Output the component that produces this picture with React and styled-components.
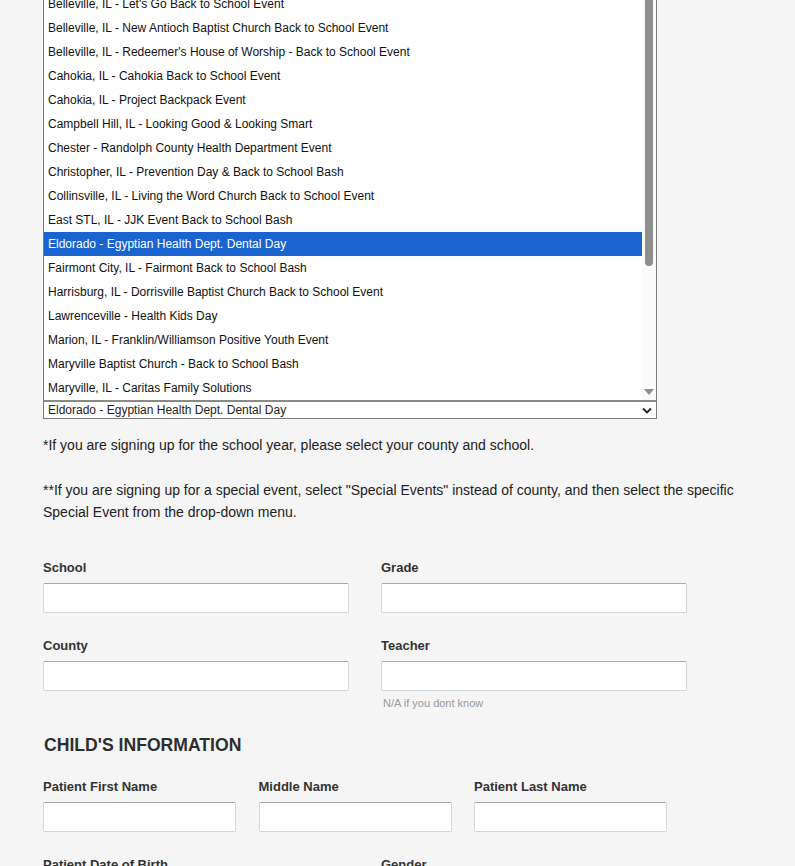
import React from 'react';
import styled, { createGlobalStyle } from 'styled-components';

const GlobalStyle = createGlobalStyle`
  html, body {
    margin: 0;
    padding: 0;
    background: #f5f5f5;
    font-family: "Liberation Sans", Arial, sans-serif;
    overflow: hidden;
  }
`;

const Page = styled.div`
  padding: 0 0 0 43px;
  width: 720px;
`;

const EventPicker = styled.div`
  margin-top: -9px;
  width: 612px;
  border: 1px solid #7a7a7a;
  background: #fff;
`;

const ListArea = styled.div`
  display: flex;
  height: 408px;
  border-bottom: 2px solid #8a8a8a;
`;

const Options = styled.ul`
  flex: 1;
  margin: 0;
  padding: 0;
  list-style: none;
  overflow: hidden;
`;

const Option = styled.li`
  height: 24px;
  line-height: 24px;
  padding-left: 4px;
  font-size: 12px;
  white-space: nowrap;
  color: ${(p) => (p.$active ? '#fff' : '#111')};
  background: ${(p) => (p.$active ? '#1a64cf' : 'transparent')};
`;

const Scrollbar = styled.div`
  width: 14px;
  display: flex;
  flex-direction: column;
  align-items: center;
  background: #fafafa;
`;

const Thumb = styled.div`
  width: 8px;
  height: 274px;
  background: #8e8e8c;
  border-radius: 0 0 4px 4px;
`;

const ArrowDown = styled.div`
  margin-top: auto;
  margin-bottom: 5px;
  width: 0;
  height: 0;
  border-left: 5px solid transparent;
  border-right: 5px solid transparent;
  border-top: 6px solid #8e8e8c;
`;

const Selected = styled.div`
  display: flex;
  align-items: center;
  justify-content: space-between;
  height: 16px;
  padding: 0 4px;
  font-size: 12px;
  color: #222;
`;

const Notes = styled.div`
  margin-top: 15px;
  width: 720px;
  font-size: 14px;
  line-height: 22px;
  color: #222;

  p {
    margin: 0 0 23px;
  }
`;

const FieldGrid = styled.div`
  display: grid;
  grid-template-columns: ${(p) => p.$cols};
  column-gap: ${(p) => p.$gap}px;
  row-gap: 25px;
  margin-top: ${(p) => p.$top || 0}px;
`;

const Field = styled.div`
  display: flex;
  flex-direction: column;
`;

const Label = styled.label`
  font-size: 13px;
  font-weight: bold;
  color: #333;
  line-height: 16px;
  margin-bottom: 7px;
`;

const Input = styled.input`
  box-sizing: border-box;
  height: 30px;
  width: 100%;
  margin: 0;
  background: #fff;
  border: 1px solid #d6d6d6;
  border-top-color: #a9a9a9;
  border-radius: 2px;
  font-family: inherit;
`;

const Hint = styled.span`
  margin-top: 6px;
  padding-left: 2px;
  font-size: 11px;
  color: #9a9a9a;
`;

const SectionHeading = styled.h2`
  margin: 25px 0 23px;
  padding-left: 1px;
  font-size: 17.6px;
  font-weight: bold;
  color: #2e2e2e;
  text-transform: uppercase;
  line-height: 22px;
`;

const events = [
  "Belleville, IL - Let's Go Back to School Event",
  'Belleville, IL - New Antioch Baptist Church Back to School Event',
  "Belleville, IL - Redeemer's House of Worship - Back to School Event",
  'Cahokia, IL - Cahokia Back to School Event',
  'Cahokia, IL - Project Backpack Event',
  'Campbell Hill, IL - Looking Good & Looking Smart',
  'Chester - Randolph County Health Department Event',
  'Christopher, IL - Prevention Day & Back to School Bash',
  'Collinsville, IL - Living the Word Church Back to School Event',
  'East STL, IL - JJK Event Back to School Bash',
  'Eldorado - Egyptian Health Dept. Dental Day',
  'Fairmont City, IL - Fairmont Back to School Bash',
  'Harrisburg, IL - Dorrisville Baptist Church Back to School Event',
  'Lawrenceville - Health Kids Day',
  'Marion, IL - Franklin/Williamson Positive Youth Event',
  'Maryville Baptist Church - Back to School Bash',
  'Maryville, IL - Caritas Family Solutions',
];

const selectedEvent = 'Eldorado - Egyptian Health Dept. Dental Day';

function Chevron() {
  return (
    <svg width="10" height="7" viewBox="0 0 10 7">
      <path d="M1 1.5 L5 5.5 L9 1.5" fill="none" stroke="#222" strokeWidth="1.8" />
    </svg>
  );
}

export default function App() {
  return (
    <>
      <GlobalStyle />
      <Page>
        <EventPicker>
          <ListArea>
            <Options>
              {events.map((name) => (
                <Option key={name} $active={name === selectedEvent}>
                  {name}
                </Option>
              ))}
            </Options>
            <Scrollbar>
              <Thumb />
              <ArrowDown />
            </Scrollbar>
          </ListArea>
          <Selected>
            <span>{selectedEvent}</span>
            <Chevron />
          </Selected>
        </EventPicker>

        <Notes>
          <p>*If you are signing up for the school year, please select your county and school.</p>
          <p>
            **If you are signing up for a special event, select "Special Events" instead of county, and then select the specific
            Special Event from the drop-down menu.
          </p>
        </Notes>

        <FieldGrid $cols="306px 306px" $gap={32} $top={37}>
          <Field>
            <Label>School</Label>
            <Input />
          </Field>
          <Field>
            <Label>Grade</Label>
            <Input />
          </Field>
          <Field>
            <Label>County</Label>
            <Input />
          </Field>
          <Field>
            <Label>Teacher</Label>
            <Input />
            <Hint>N/A if you dont know</Hint>
          </Field>
        </FieldGrid>

        <SectionHeading>Child's Information</SectionHeading>

        <FieldGrid $cols="193px 193px 193px" $gap={22.5}>
          <Field>
            <Label>Patient First Name</Label>
            <Input />
          </Field>
          <Field>
            <Label>Middle Name</Label>
            <Input />
          </Field>
          <Field>
            <Label>Patient Last Name</Label>
            <Input />
          </Field>
        </FieldGrid>

        <FieldGrid $cols="306px 306px" $gap={32} $top={25}>
          <Field>
            <Label>Patient Date of Birth</Label>
            <Input />
          </Field>
          <Field>
            <Label>Gender</Label>
            <Input />
          </Field>
        </FieldGrid>
      </Page>
    </>
  );
}
